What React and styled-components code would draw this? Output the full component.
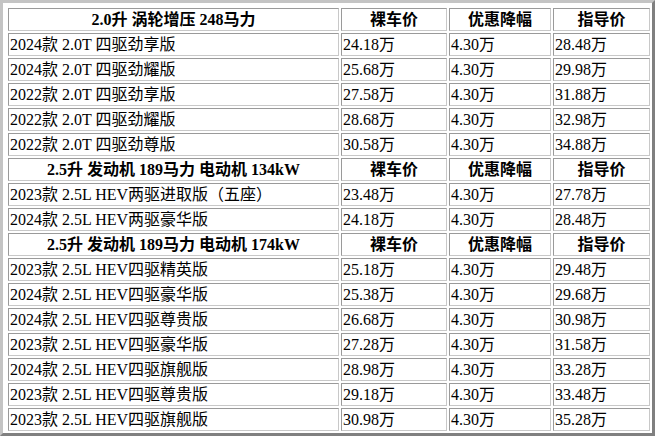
import React from "react";
import styled, { createGlobalStyle } from "styled-components";

const Global = createGlobalStyle`
  html, body { margin: 0; padding: 0; background: #ffffff; }
  body {
    font-family: "Liberation Serif", "Noto Sans CJK SC", serif;
    font-size: 16px;
    color: #000000;
  }
`;

const Frame = styled.div`
  display: inline-block;
  border-style: solid;
  border-width: 3px;
  border-color: #c4c4c4 #808080 #808080 #c4c4c4;
  padding: 3px 0 0 3px;
`;

const Table = styled.table`
  border-collapse: separate;
  border-spacing: 2px;
  table-layout: fixed;
  width: 646px;
`;

const Col = styled.col`
  width: ${(p) => p.$w}px;
`;

const cellBase = `
  box-sizing: border-box;
  height: 23px;
  padding: 1px;
  border: 1px solid #a0a0a0;
  border-color: #9a9a9a #c8c8c8 #c8c8c8 #9a9a9a;
  line-height: 19px;
  white-space: nowrap;
  overflow: hidden;
  font-family: "Liberation Serif", "Noto Sans CJK SC", serif;
  font-size: 16px;
`;

const HeadCell = styled.th`
  ${cellBase}
  font-weight: bold;
  text-align: center;
`;

const Cell = styled.td`
  ${cellBase}
  font-weight: normal;
  text-align: left;
`;

const groups = [
  {
    title: "2.0升 涡轮增压 248马力",
    rows: [
      ["2024款 2.0T 四驱劲享版", "24.18万", "4.30万", "28.48万"],
      ["2024款 2.0T 四驱劲耀版", "25.68万", "4.30万", "29.98万"],
      ["2022款 2.0T 四驱劲享版", "27.58万", "4.30万", "31.88万"],
      ["2022款 2.0T 四驱劲耀版", "28.68万", "4.30万", "32.98万"],
      ["2022款 2.0T 四驱劲尊版", "30.58万", "4.30万", "34.88万"],
    ],
  },
  {
    title: "2.5升 发动机 189马力 电动机 134kW",
    rows: [
      ["2023款 2.5L HEV两驱进取版（五座）", "23.48万", "4.30万", "27.78万"],
      ["2024款 2.5L HEV两驱豪华版", "24.18万", "4.30万", "28.48万"],
    ],
  },
  {
    title: "2.5升 发动机 189马力 电动机 174kW",
    rows: [
      ["2023款 2.5L HEV四驱精英版", "25.18万", "4.30万", "29.48万"],
      ["2024款 2.5L HEV四驱豪华版", "25.38万", "4.30万", "29.68万"],
      ["2024款 2.5L HEV四驱尊贵版", "26.68万", "4.30万", "30.98万"],
      ["2023款 2.5L HEV四驱豪华版", "27.28万", "4.30万", "31.58万"],
      ["2024款 2.5L HEV四驱旗舰版", "28.98万", "4.30万", "33.28万"],
      ["2023款 2.5L HEV四驱尊贵版", "29.18万", "4.30万", "33.48万"],
      ["2023款 2.5L HEV四驱旗舰版", "30.98万", "4.30万", "35.28万"],
    ],
  },
];

export default function App() {
  return (
    <>
      <Global />
      <Frame>
        <Table>
          <colgroup>
            <Col $w={331} />
            <Col $w={106} />
            <Col $w={102} />
            <Col $w={97} />
          </colgroup>
          <tbody>
            {groups.map((g) => (
              <React.Fragment key={g.title}>
                <tr>
                  <HeadCell>{g.title}</HeadCell>
                  <HeadCell>裸车价</HeadCell>
                  <HeadCell>优惠降幅</HeadCell>
                  <HeadCell>指导价</HeadCell>
                </tr>
                {g.rows.map((r) => (
                  <tr key={r[0]}>
                    {r.map((c, i) => (
                      <Cell key={i}>{c}</Cell>
                    ))}
                  </tr>
                ))}
              </React.Fragment>
            ))}
          </tbody>
        </Table>
      </Frame>
    </>
  );
}
